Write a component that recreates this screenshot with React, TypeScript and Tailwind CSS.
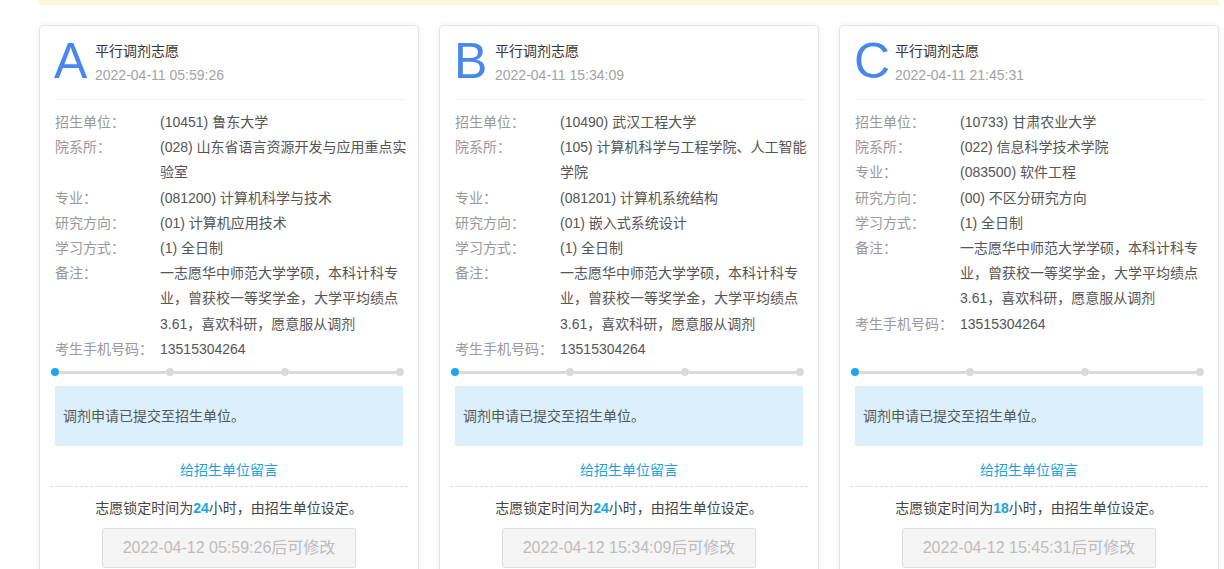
import React from "react";

type Row = { label: string; value: string };
type CardData = {
  letter: string;
  date: string;
  rows: Row[];
  hours: string;
  unlock: string;
};

const remark = "一志愿华中师范大学学硕，本科计科专业，曾获校一等奖学金，大学平均绩点3.61，喜欢科研，愿意服从调剂";

const cards: CardData[] = [
  {
    letter: "A",
    date: "2022-04-11 05:59:26",
    rows: [
      { label: "招生单位：", value: "(10451) 鲁东大学" },
      { label: "院系所：", value: "(028) 山东省语言资源开发与应用重点实验室" },
      { label: "专业：", value: "(081200) 计算机科学与技术" },
      { label: "研究方向：", value: "(01) 计算机应用技术" },
      { label: "学习方式：", value: "(1) 全日制" },
      { label: "备注：", value: remark },
      { label: "考生手机号码：", value: "13515304264" },
    ],
    hours: "24",
    unlock: "2022-04-12 05:59:26后可修改",
  },
  {
    letter: "B",
    date: "2022-04-11 15:34:09",
    rows: [
      { label: "招生单位：", value: "(10490) 武汉工程大学" },
      { label: "院系所：", value: "(105) 计算机科学与工程学院、人工智能学院" },
      { label: "专业：", value: "(081201) 计算机系统结构" },
      { label: "研究方向：", value: "(01) 嵌入式系统设计" },
      { label: "学习方式：", value: "(1) 全日制" },
      { label: "备注：", value: remark },
      { label: "考生手机号码：", value: "13515304264" },
    ],
    hours: "24",
    unlock: "2022-04-12 15:34:09后可修改",
  },
  {
    letter: "C",
    date: "2022-04-11 21:45:31",
    rows: [
      { label: "招生单位：", value: "(10733) 甘肃农业大学" },
      { label: "院系所：", value: "(022) 信息科学技术学院" },
      { label: "专业：", value: "(083500) 软件工程" },
      { label: "研究方向：", value: "(00) 不区分研究方向" },
      { label: "学习方式：", value: "(1) 全日制" },
      { label: "备注：", value: remark },
      { label: "考生手机号码：", value: "13515304264" },
    ],
    hours: "18",
    unlock: "2022-04-12 15:45:31后可修改",
  },
];

function Dot({ active }: { active?: boolean }) {
  return (
    <div
      className={
        active
          ? "w-[8px] h-[8px] rounded-full bg-[#1ea7ee] shrink-0"
          : "w-[8px] h-[8px] rounded-full bg-[#dadada] shrink-0"
      }
    />
  );
}

function Seg() {
  return <div className="flex-1 h-[3px] bg-[#dadada]" />;
}

function Card({ c }: { c: CardData }) {
  return (
    <div className="w-[380px] shrink-0 bg-white border border-[#e6e6e6] rounded-[4px] shadow-[0_0_6px_rgba(0,0,0,0.07)] px-[15px] pb-[15px]">
      <div className="flex pt-[10px] pb-[12px] border-b border-[#eeeeee]">
        <div className="w-[40px] text-[50px] leading-[50px] text-[#4a87ec] -ml-[1px]">{c.letter}</div>
        <div className="pt-[3px] ml-[1px]">
          <div className="text-[14px] leading-[24px] text-[#333]">平行调剂志愿</div>
          <div className="text-[14px] leading-[24px] text-[#a3a3a3]">{c.date}</div>
        </div>
      </div>
      <div className="h-[261px] pt-[10px] mr-[-6px]">
        {c.rows.map((r, i) => (
          <div key={i} className="flex text-[14px] leading-[25.2px]">
            <div className="w-[105px] shrink-0 text-[#999]">{r.label}</div>
            <div className="flex-1 text-[#555]">{r.value}</div>
          </div>
        ))}
      </div>
      <div className="flex items-center mt-[7px] -ml-[4px] w-[353px]">
        <Dot active />
        <Seg />
        <Dot />
        <Seg />
        <Dot />
        <Seg />
        <Dot />
      </div>
      <div className="mt-[10px] h-[60px] bg-[#dbf0fb] flex items-center px-[8px] text-[14px] text-[#555]">
        调剂申请已提交至招生单位。
      </div>
      <div className="mt-[14px] text-center text-[14px] leading-[20px] text-[#1ea2e4]">给招生单位留言</div>
      <div className="mt-[6px] -mx-[5px] border-t border-dashed border-[#dddddd]" />
      <div className="mt-[11px] text-center text-[14px] leading-[20px] text-[#444]">
        志愿锁定时间为<span className="font-bold text-[#1ea2e4]">{c.hours}</span>小时，由招生单位设定。
      </div>
      <div className="mt-[10px] mx-auto w-[254px] h-[40px] flex items-center justify-center bg-[#f5f5f5] border border-[#dcdcdc] rounded-[3px] text-[16px] text-[#bdbdbd]">
        {c.unlock}
      </div>
    </div>
  );
}

export default function App() {
  return (
    <div
      className="w-[1224px] h-[569px] overflow-hidden bg-white"
      style={{ fontFamily: '"Liberation Sans", "Noto Sans CJK SC", sans-serif' }}
    >
      <div className="ml-[39px] w-[1180px] h-[5px] bg-[#fdf7da]" />
      <div className="ml-[39px] mt-[20px] flex gap-[20px]">
        {cards.map((c) => (
          <Card key={c.letter} c={c} />
        ))}
      </div>
    </div>
  );
}
